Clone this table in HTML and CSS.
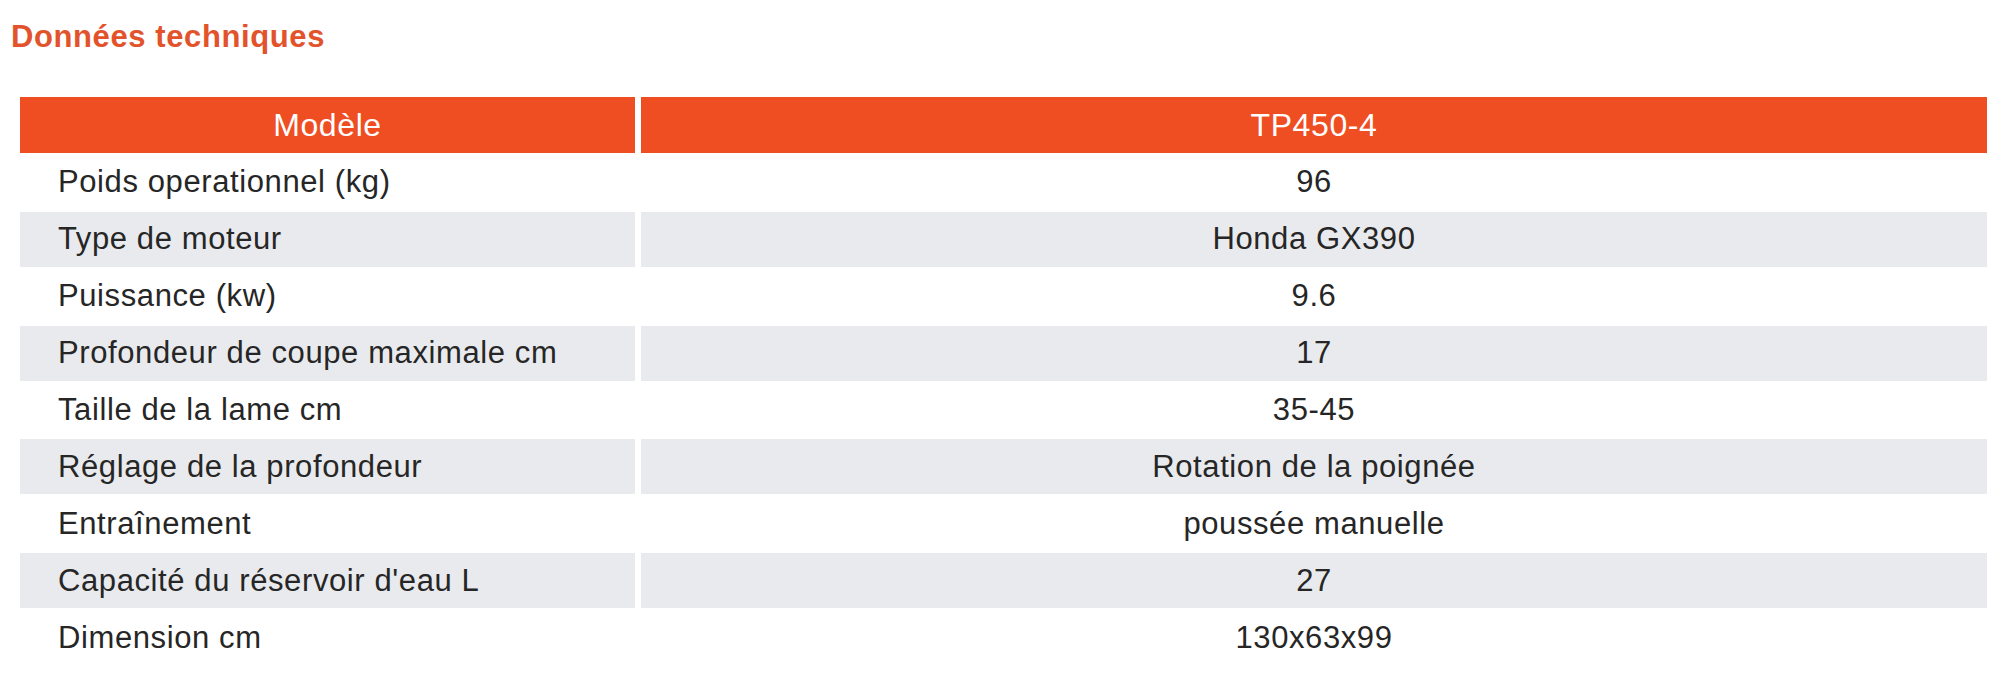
FILE: index.html
```html
<!DOCTYPE html>
<html lang="fr">
<head>
<meta charset="utf-8">
<title>Données techniques</title>
<link rel="stylesheet" href="styles.css">
</head>
<body>
<div class="page">
  <h2 class="title">Données techniques</h2>
  <table class="specs">
    <thead>
      <tr><th class="col-label">Modèle</th><th>TP450-4</th></tr>
    </thead>
    <tbody>
      <tr><td class="col-label">Poids operationnel (kg)</td><td>96</td></tr>
      <tr class="alt"><td class="col-label">Type de moteur</td><td>Honda GX390</td></tr>
      <tr><td class="col-label">Puissance (kw)</td><td>9.6</td></tr>
      <tr class="alt"><td class="col-label">Profondeur de coupe maximale cm</td><td>17</td></tr>
      <tr><td class="col-label">Taille de la lame cm</td><td>35-45</td></tr>
      <tr class="alt"><td class="col-label">Réglage de la profondeur</td><td>Rotation de la poignée</td></tr>
      <tr><td class="col-label">Entraînement</td><td>poussée manuelle</td></tr>
      <tr class="alt"><td class="col-label">Capacité du réservoir d'eau L</td><td>27</td></tr>
      <tr><td class="col-label">Dimension cm</td><td>130x63x99</td></tr>
    </tbody>
  </table>
</div>
</body>
</html>
```

FILE: styles.css
```css
html, body {
  margin: 0;
  padding: 0;
  background: #ffffff;
}

.page {
  font-family: "Liberation Sans", Arial, sans-serif;
  color: #222222;
}

.title {
  margin: 0;
  padding: 19px 0 0 11px;
  height: 75px;
  box-sizing: border-box;
  font-size: 31px;
  line-height: 36px;
  font-weight: bold;
  letter-spacing: 0.6px;
  color: #e2532c;
}

.specs {
  margin: 20px 7px 0 14px;
  width: calc(100% - 21px);
  border-collapse: separate;
  border-spacing: 6px 2px;
  table-layout: fixed;
}

.specs th,
.specs td {
  padding: 0;
  font-size: 31px;
  letter-spacing: 0.6px;
  font-weight: normal;
  text-align: center;
  vertical-align: middle;
}

.specs th {
  height: 56px;
  font-size: 32px;
  background: #ef4e22;
  color: #ffffff;
}

.specs td {
  height: 54.9px;
  color: #262626;
}

.specs .col-label {
  width: 615px;
}

.specs td.col-label {
  text-align: left;
  padding-left: 38px;
}

.specs tr.alt td {
  background: #e9eaed;
}
```
